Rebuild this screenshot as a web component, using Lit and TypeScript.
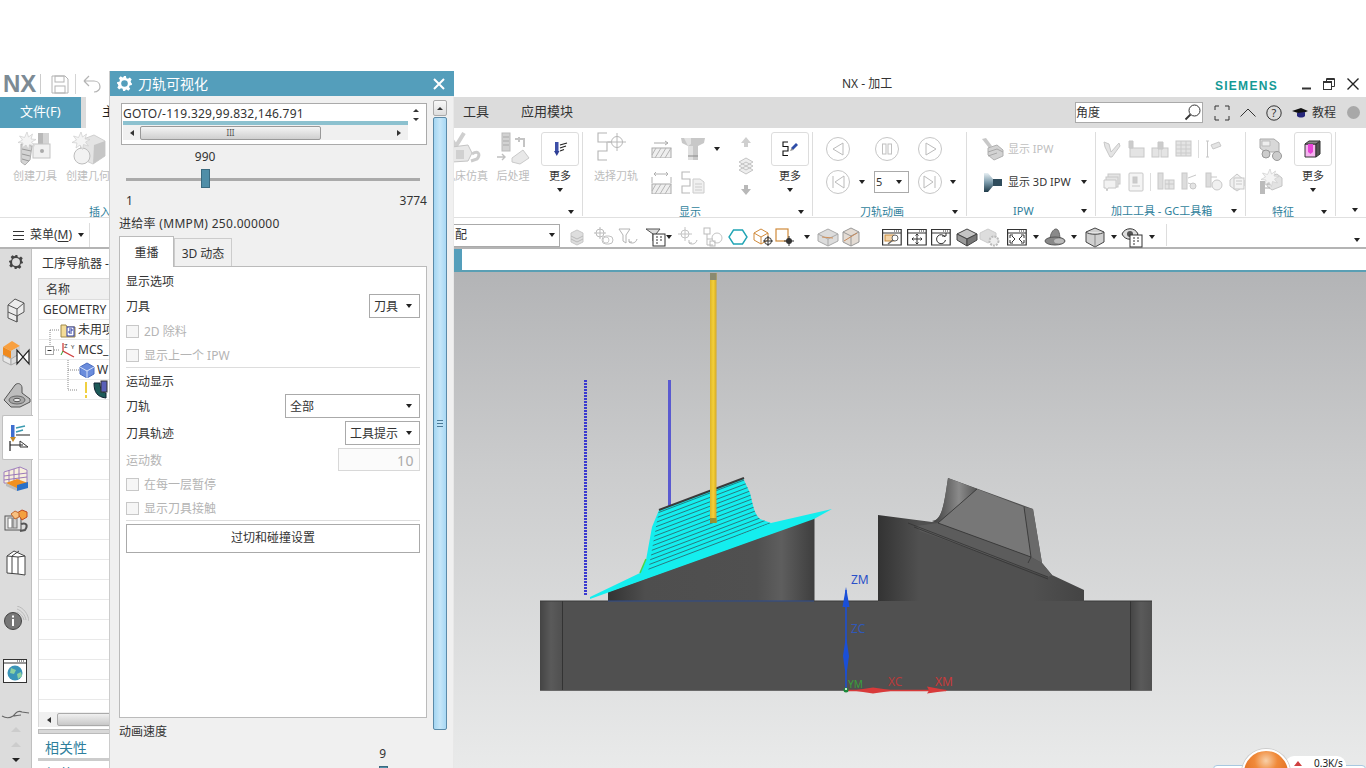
import { LitElement, css, html, svg, TemplateResult } from "lit";
import { customElement } from "lit/decorators.js";

const ic = (w: number, h: number, body: unknown) =>
  html`<svg class="ic" width=${w} height=${h} viewBox="0 0 ${w} ${h}" fill="none">${body}</svg>`;

const burst = (x: number, y: number) => svg`<path transform="translate(${x} ${y})" d="M8 0l1.500 5 4-3-1.500 5 5 .5-4.500 2.500 3 4-5-1.500-1 5-2.500-4.500-4 3 1-5-5-.5 4.500-2.500-3-4 5 1.500z" fill="#f4f4f4" stroke="#cfcfcf" stroke-width=".7"/>`;

// ribbon icons
const createTool = ic(38, 34, svg`
  <rect x="22" y="1" width="11" height="17" fill="#b8b8b8"/><rect x="27" y="1" width="6" height="17" fill="#d4d4d4"/>
  <rect x="17" y="12" width="17" height="14" fill="#f0f0f0" stroke="#c4c4c4"/><circle cx="26" cy="19" r="2" fill="#aaa"/>
  <path d="M5 12l11 2-2 14-5 5-4-3z" fill="#d4d4d4" stroke="#b0b0b0"/><path d="M6 17l9 2M6 22l8 2M6 27l7 2" stroke="#999"/>
  ${burst(3, 0)}`);
const createGeom = ic(38, 34, svg`
  <path d="M12 8l13-5 11 6v15l-12 8-13-6z" fill="#e4e4e4" stroke="#d0d0d0"/><path d="M25 13l11-4v15l-12 8z" fill="#c6c6c6"/>
  <circle cx="13" cy="24" r="8" fill="#f2f2f2" stroke="#bdbdbd"/>${burst(4, 0)}`);
const machineSim = ic(36, 34, svg`
  <path d="M4 8l4 6 8-13" stroke="#cfcfcf" stroke-width="4"/><path d="M4 15l16-2 4 8-4 8-16 1z" fill="#e8e8e8" stroke="#c4c4c4"/>
  <rect x="8" y="18" width="8" height="9" fill="#d0d0d0"/><path d="M24 22c6-4 9 0 5 5l-6 2" stroke="#ccc" stroke-width="3"/>`);
const postProc = ic(36, 34, svg`
  <rect x="7" y="1" width="8" height="18" fill="#d2d2d2" stroke="#bbb"/><path d="M8 5h6M8 9h6M8 13h6" stroke="#aaa"/>
  <path d="M20 7h9v8M24 5v5" stroke="#c4c4c4" stroke-width="2"/><path d="M2 25h8m-3-3l3 3-3 3" stroke="#c0c0c0" stroke-width="1.400"/>
  <path d="M17 26l11-8 6 8-9 6-8-2z" fill="#e8e8e8" stroke="#cacaca"/>`);
const moreOp = ic(20, 20, svg`
  <rect x="5" y="3" width="3.500" height="9" fill="#3c4fa8"/><path d="M4 12h5.500l-2.700 5z" fill="#2f3f96"/>
  <path d="M10 6l7-2M10 9l6-2M10 12l4-1.500" stroke="#222" stroke-width="1.200"/>`);
const selectPath = ic(40, 34, svg`
  <path d="M11 1H2v9h9v9H2v9h9" stroke="#b4b4b4" stroke-width="1.100"/>
  <path d="M11 10h4" stroke="#b4b4b4"/>
  <circle cx="21" cy="10" r="5.500" stroke="#b8b8b8"/><path d="M21 1v18M12 10h18" stroke="#b8b8b8"/>`);
const hatch = svg`<rect x="1" y="8" width="19" height="10" fill="#eee" stroke="#aaa"/><path d="M4 18l6-10M9 18l6-10M14 18l6-10M1 15l4-7" stroke="#b4b4b4"/>`;
const pathHatch = ic(21, 18, svg`${hatch}<path d="M3 3h14m-3-2l3 2-3 2" stroke="#aaa"/>`);
const pathHatch2 = ic(23, 23, svg`<g transform="translate(1 5)">${hatch}</g><path d="M4 3h14M2 6v6M21 6v6M6 1L4 3l2 2M16 1l2 2-2 2" stroke="#b0b0b0"/>`);
const endMill = ic(26, 24, svg`
  <path d="M1 1h24l-1 5-6 3v14H8V9L2 6z" fill="#c8c8c8"/><path d="M4 1h7v6l-3 2z" fill="#e2e2e2"/><rect x="8" y="9" width="5" height="14" fill="#e0e0e0"/><path d="M8 19h10" stroke="#8a8a8a"/>`);
const pathDoc = ic(24, 23, svg`
  <path d="M9 1H1v7h8v7H1v7h8" stroke="#b8b8b8" stroke-width="1.100"/>
  <path d="M12 8h7l4 3v11H12z" fill="#f0f0f0" stroke="#ccc"/><path d="M14 13h7M14 16h7M14 19h7" stroke="#ccc"/>`);
const arrowUp = ic(12, 12, svg`<path d="M6 1l5 6H8v4H4V7H1z" fill="#cfcfcf"/>`);
const arrowDown = ic(12, 12, svg`<path d="M6 11l5-6H8V1H4v4H1z" fill="#b8b8b8"/>`);
const layers = ic(16, 18, svg`<path d="M1 5l7-4 7 4-7 4zM1 9l7-4 7 4-7 4zM1 13l7-4 7 4-7 4z" fill="#eee" stroke="#c4c4c4"/>`);
const pathMore = ic(20, 20, svg`
  <path d="M8 3H3v4.500h5V12H3v4.500h5" stroke="#111" stroke-width="1.100"/>
  <path d="M11 9l5-5 2 2-5 5z" fill="#2e4da8"/><path d="M10 12l1.500-3 2 2z" fill="#888"/>`);
const circleIc = (inner: unknown) => ic(26, 26, svg`<circle cx="13" cy="13" r="11.500" stroke="#c6c6c6"/>${inner}`);
const cBack = circleIc(svg`<path d="M18 7L8 13l10 6z" stroke="#bbb"/>`);
const cPause = circleIc(svg`<rect x="8.500" y="8" width="3.500" height="10" stroke="#c0c0c0"/><rect x="14" y="8" width="3.500" height="10" stroke="#c0c0c0"/>`);
const cPlay = circleIc(svg`<path d="M9 7l10 6-10 6z" stroke="#bbb"/>`);
const cStart = circleIc(svg`<path d="M8 7v12M19 7L10 13l9 6z" stroke="#bbb"/>`);
const cEnd = circleIc(svg`<path d="M18 7v12M7 7l9 6-9 6z" stroke="#bbb"/>`);
const ipwGray = ic(24, 24, svg`
  <path d="M2 2l4-1 6 8-3 2z" fill="#c8c8c8"/><path d="M8 11l9-3 6 5v6l-9 4-6-5z" fill="#d2d2d2" stroke="#b0b0b0"/><path d="M8 15l9-3 6 3M8 19l9-3" stroke="#a8a8a8"/>`);
const ipw3d = ic(20, 20, svg`
  <defs><linearGradient id="st" x1="0" y1="0" x2="0" y2="1"><stop offset="0" stop-color="#e8f0f4"/><stop offset=".5" stop-color="#7b9aaa"/><stop offset="1" stop-color="#1e3a48"/></linearGradient></defs>
  <path d="M1 1h4l5 6h9v7h-9l-5 6H1z" fill="url(#st)"/><path d="M10 7h9v7h-9z" fill="#2f4c5c"/>`);
const gr = (body: unknown) => ic(20, 20, svg`<g stroke="#c8c8c8" fill="#e4e4e4">${body}</g>`);
const t1 = gr(svg`<path d="M2 3l5 2 2 8 8-9 1 3-8 11h-2L3 8z"/>`);
const t2 = gr(svg`<rect x="4" y="9" width="14" height="9"/><path d="M3 2h4v7H3z" fill="#ccc"/>`);
const t3 = gr(svg`<rect x="2" y="9" width="7" height="9"/><rect x="11" y="9" width="7" height="9"/><path d="M8 3h5v7H8z" fill="#ccc"/>`);
const t4 = gr(svg`<rect x="2" y="2" width="15" height="15"/><path d="M2 6h15M2 10h15M2 14h15M7 2v15M12 2v15" stroke="#ccc"/>`);
const t5 = gr(svg`<path d="M3 2h3M4.500 2v16M3 18h3M8 6l8-3 2 4-8 3z"/>`);
const t6 = gr(svg`<rect x="6" y="2" width="12" height="10"/><rect x="4" y="5" width="12" height="10"/><path d="M2 8h12v8H6l-1 3-1-3H2z" fill="#f2f2f2"/>`);
const t7 = gr(svg`<rect x="3" y="1" width="14" height="18" rx="1" fill="#f4f4f4"/><rect x="7" y="5" width="4" height="6" fill="#ccc"/><path d="M6 14h8" />`);
const t8 = gr(svg`<rect x="3" y="1" width="5" height="16" fill="#ddd"/><rect x="10" y="8" width="9" height="9"/><path d="M10 12h9M14 8v9"/>`);
const t9 = gr(svg`<rect x="3" y="1" width="5" height="16" fill="#ddd"/><path d="M9 6l8-3M9 11l8 3"/><circle cx="14" cy="14" r="3"/>`);
const t10 = gr(svg`<rect x="3" y="1" width="5" height="14" fill="#ddd"/><path d="M8 5h6"/><circle cx="14" cy="13" r="5" fill="#f0f0f0"/>`);
const t11 = gr(svg`<path d="M3 8l7-6 7 6v6l-7 5-7-5z" fill="#efefef"/><rect x="7" y="6" width="10" height="11" fill="#f4f4f4"/><path d="M9 9h6M9 12h6"/>`);
const feat1 = ic(26, 26, svg`<path d="M3 3h14l5 4v9H8l-5-4z" fill="#d8d8d8" stroke="#aaa"/><circle cx="9" cy="18" r="4" fill="#ccc" stroke="#999"/><circle cx="20" cy="20" r="4.500" fill="#ccc" stroke="#999"/><path d="M5 5h8v5H5z" fill="#eee" stroke="#bbb"/>`);
const feat2 = ic(26, 26, svg`<path d="M10 8l10-3 5 4v8l-10 4-5-4z" fill="#e2e2e2" stroke="#c4c4c4"/><rect x="3" y="12" width="5" height="13" fill="#bbb"/><path d="M8 15h6M8 19h5" stroke="#aaa"/>${burst(5, 0)}`);
const featMore = ic(18, 18, svg`
  <path d="M1 4h11v13H1z" fill="#f4b4ee" stroke="#333"/><path d="M12 4l4-3v13l-4 3z" fill="#555" stroke="#333"/><path d="M1 4l4-3h11l-4 3z" fill="#888" stroke="#333"/>
  <path d="M4 4v8l2.500 2L9 12V4z" fill="#e844d8"/>`);

// toolbar icons
const stackGray = ic(18, 20, svg`<path d="M3 6l6-3 6 3v9l-6 3-6-3z" fill="#dedede" stroke="#c8c8c8"/><path d="M3 9l6 3 6-3M3 12l6 3 6-3" stroke="#bbb"/>`);
const crossLink = ic(22, 20, svg`<circle cx="7" cy="6" r="4" stroke="#bbb"/><path d="M7 0v12M1 6h12" stroke="#bbb"/><rect x="9" y="9" width="11" height="8" rx="4" stroke="#c0c0c0" fill="#fff"/><circle cx="13" cy="13" r="3" stroke="#ccc"/>`);
const funnel = ic(22, 20, svg`<path d="M2 2h11l-4 6v8l-3-2V8z" stroke="#b4b4b4"/><path d="M20 12c-1 4-5 5-8 3m0 0v-3m0 3h3" stroke="#b0b0b0"/>`);
const funnelGrid = ic(22, 20, svg`<path d="M2 2h14l-4 5v9l-3-2V7z" fill="#ddd" stroke="#555"/><rect x="9" y="7" width="12" height="12" fill="#fff" stroke="#333"/><path d="M12 10h2M16 10h2M12 13h2M16 13h2M12 16h2" stroke="#333"/>`);
const crossUndo = ic(22, 20, svg`<circle cx="8" cy="7" r="4" stroke="#c4c4c4"/><path d="M8 0v14M1 7h14" stroke="#c4c4c4"/><path d="M20 13c-1 4-5 5-8 3m0 0v-3m0 3h3" stroke="#bbb"/>`);
const treeSel = ic(22, 20, svg`<rect x="2" y="1" width="6" height="6" stroke="#bbb"/><path d="M5 7v11h6M5 12h6" stroke="#bbb"/><circle cx="15" cy="11" r="5" stroke="#c4c4c4"/><rect x="8" y="14" width="5" height="5" stroke="#bbb"/>`);
const hexagon = ic(20, 18, svg`<path d="M5.500 2h9L19 9l-4.500 7h-9L1 9z" stroke="#1fa4b4" stroke-width="1.400"/>`);
const cubeCross = ic(22, 20, svg`<path d="M1 6l7-4 7 4v7l-7 4-7-4z" fill="#fff" stroke="#d08a3a"/><path d="M1 6l7 4 7-4M8 10v7" stroke="#d08a3a"/><circle cx="15" cy="14" r="3.500" stroke="#333"/><path d="M15 9v10M10 14h10" stroke="#333"/>`);
const squareCross = ic(22, 20, svg`<rect x="2" y="2" width="12" height="12" stroke="#d08a3a" stroke-width="1.200"/><circle cx="15" cy="14" r="3" fill="#333"/><path d="M15 9v10M10 14h10" stroke="#333"/>`);
const cubeCut = ic(22, 20, svg`<path d="M1 7l10-5 10 5v7l-10 5-10-5z" fill="#dcdcdc" stroke="#aaa"/><path d="M1 7l10 5 10-5M11 12v7" stroke="#aaa"/><path d="M5 10l11 1" stroke="#d0905a"/>`);
const cubeCut2 = ic(18, 20, svg`<path d="M1 5l8-4 8 4v10l-8 4-8-4z" fill="#e4dcd4" stroke="#999"/><path d="M1 5l8 4 8-4M9 9v10" stroke="#999"/><path d="M2 14l13-8" stroke="#c88a5a"/>`);
const win = (inner: unknown) => ic(20, 20, svg`<rect x=".5" y="2.500" width="15.500" height="15.500" transform="scale(1.200 1)" fill="#fff" stroke="#333"/><path d="M1 6h18" stroke="#333"/><path d="M12 4h6" stroke="#333" stroke-dasharray="1 1"/>${inner}`);
const winZoom = win(svg`<rect x="3" y="8" width="9" height="6" fill="#f4d4a8" stroke="#c88a3a"/><circle cx="13" cy="11" r="3" fill="#fff" stroke="#666"/><path d="M11 13l-5 4" stroke="#666" stroke-width="1.500"/>`);
const winPan = win(svg`<path d="M10 7v10M5 12h10" stroke="#333"/><path d="M8.500 8.500L10 7l1.500 1.500M8.500 15.500L10 17l1.500-1.500M6.500 10.500L5 12l1.500 1.500M13.500 10.500L15 12l-1.500 1.500" stroke="#333"/>`);
const winRotate = win(svg`<path d="M14 10a4.500 4.500 0 1 0 .5 3" stroke="#333"/><path d="M11 9h4V6" stroke="#333"/>`);
const winFit = win(svg`<path d="M3 8h3M3 8v3M17 8h-3M17 8v3M3 16h3M3 16v-3M17 16h-3M17 16v-3" stroke="#333"/><path d="M5 9l3 3M15 9l-3 3M5 15l3-3M15 15l-3-3" stroke="#333"/>`);
const solidCube = ic(22, 20, svg`<path d="M1 7l10-5 10 5-10 5z" fill="#c4c4c4" stroke="#444"/><path d="M1 7v6l10 6V12z" fill="#999" stroke="#444"/><path d="M21 7v6l-10 6V12z" fill="#777" stroke="#444"/>`);
const cubeGear = ic(22, 20, svg`<path d="M1 6l8-4 8 4v6l-8 4-8-4z" fill="#ddd" stroke="#ccc"/><circle cx="15" cy="14" r="4.500" fill="#eee" stroke="#bbb" stroke-width="2" stroke-dasharray="2 1"/>`);
const cone = ic(24, 20, svg`<path d="M7 13c0-6 3-11 6-11s4 6 4 11z" fill="#8a8a8a" stroke="#666"/><ellipse cx="12" cy="14" rx="10" ry="4" fill="#888" stroke="#555"/><ellipse cx="16" cy="14" rx="5" ry="2.500" fill="#bbb"/>`);
const cylinderBlock = ic(22, 22, svg`<path d="M2 6l9-4 9 4v10l-9 5-9-5z" fill="#d0d0d0" stroke="#444"/><path d="M2 6c3 3 15 3 18 0" stroke="#444" fill="#e4e4e4"/><path d="M11 9v12" stroke="#888"/>`);
const eyeGrid = ic(24, 22, svg`<path d="M1 8c3-7 13-7 16 0-3 7-13 7-16 0z" fill="#ddd" stroke="#333"/><circle cx="9" cy="8" r="3" fill="#555"/><rect x="9" y="9" width="12" height="12" fill="#fff" stroke="#333"/><path d="M12 12h2M16 12h2M12 15h2M16 15h2M12 18h2" stroke="#333"/>`);

// left rail icons
const railBlock = ic(24, 26, svg`<path d="M11 1l9 4v9l-7 4v6L4 20V7z" fill="#ececec" stroke="#555"/><path d="M4 7l9 4v13M13 11l7-6M4 14l9 4" stroke="#555"/>`);
const railOrange = ic(30, 28, svg`
  <path d="M2 8l9-6 8 5-9 5z" fill="#f8a040"/><path d="M2 8l8 4v8l-8-4z" fill="#f08a1e"/><path d="M10 12l9-5v7l-9 6z" fill="#cfcfcf"/>
  <path d="M2 16v6l8 4v-6z" fill="#e8e8e8" stroke="#aaa"/><path d="M10 20v6l8-4v-7z" fill="#ddd" stroke="#aaa"/>
  <path d="M16 11v14l12-14v14z" stroke="#222" stroke-width="1.200" fill="#fff"/>`);
const railBracket = ic(30, 26, svg`
  <path d="M3 18L14 3c3-3 7-1 7 3v5l8 6v3l-10 5H10z" fill="#bdbdbd" stroke="#555"/><ellipse cx="16" cy="18" rx="8" ry="4" fill="#a8a8a8" stroke="#666"/><ellipse cx="16" cy="18" rx="3.500" ry="1.700" fill="#eee" stroke="#555"/>`);
const railNav = ic(24, 28, svg`
  <rect x="5" y="1" width="3.500" height="12" fill="#3f6fd0"/><path d="M4 13h6l-3 5z" fill="#c28a2a"/><path d="M10 4l9-2M10 8l7-2" stroke="#3a9ab0" stroke-width="1.400"/>
  <path d="M10 11h14M4 17v10M4 21h13" stroke="#222" stroke-width="1.200"/><path d="M14 17l8 6h-8z" stroke="#333"/>`);
const railTable = ic(26, 26, svg`
  <path d="M1 6l16-5 7 3v14L1 17z" fill="#f8f0dc" stroke="#a080c0"/><path d="M6 4v14M11 3v15M16 1v17M1 10l23-3M1 14l23-3" stroke="#9a78b8"/>
  <path d="M3 17l11-4 11 4-11 6z" fill="#f09020"/><path d="M14 19l11-3v6l-11 3z" fill="#2a70c8"/><path d="M3 17v3l11 5v-3z" fill="#bbb"/>`);
const railMachine = ic(26, 26, svg`
  <rect x="2" y="8" width="16" height="14" fill="#e4e4e4" stroke="#555"/><rect x="5" y="10" width="4" height="10" fill="#fff" stroke="#777"/><rect x="10" y="10" width="4" height="10" fill="#ccc" stroke="#777"/>
  <path d="M14 5l5-3 5 2v5l-5 3z" fill="#f4a040" stroke="#c04820"/><path d="M8 6l4-3 4 2v4l-4 2z" fill="#f8c080" stroke="#c06830"/><path d="M18 16c6-2 7 2 4 6l-5 1" stroke="#555" stroke-width="2"/>`);
const railBooks = ic(22, 26, svg`<path d="M2 6l7-5 11 5v19l-7-1-11-1z" fill="#fff" stroke="#444"/><path d="M13 7v17M7 6v18M2 6l11 1 7-1M7 6l7-5" stroke="#444"/>`);
const railInfo = ic(26, 26, svg`
  <circle cx="10" cy="15" r="8.500" fill="#777" stroke="#444"/><rect x="9" y="13" width="2" height="7" fill="#fff"/><rect x="9" y="9.500" width="2" height="2" fill="#fff"/>
  <path d="M14 3c5 2 8 6 9 11M14 6c4 2 6 4 7 8M14 0c7 2 11 8 12 15" stroke="#bbb"/>`);
const railGlobe = ic(26, 26, svg`
  <rect x=".5" y="1.500" width="23" height="23" fill="#fff" stroke="#333"/><path d="M1 5h23" stroke="#333"/><path d="M14 3h8" stroke="#333" stroke-dasharray="1 1"/>
  <circle cx="12" cy="15" r="7.500" fill="#3a94b8"/><path d="M8 10l5 2-2 4-4-1zM14 16l4-2 1 4-4 3z" fill="#8cd0a0"/>`);
const railWave = ic(30, 12, svg`<path d="M1 8c5 3 8 2 11 0 3-3 5-6 9-4l7 1M12 8c3 0 5-1 8-1" stroke="#666" stroke-width="1.100"/>`);
const arrowSmall = ic(12, 10, svg`<path d="M6 2l5 5H1z" fill="#ccc"/>`);
const arrowTiny = ic(12, 10, svg`<path d="M6 7L2 3h8z" fill="#222"/>`);
const gear = (c: string, hole: string, s = 16, r = 3.5) => html`<svg class="ic" width=${s} height=${s} viewBox="0 0 16 16"><path d="M6.500 0h3l.5 2.300 1.700.7 2-1.300 2 2-1.200 2 .7 1.800L16 8v0l-.2 1.500-2.300.5-.7 1.700 1.300 2-2 2-2-1.200-1.800.7L9.500 16h-3L6 13.700 4.300 13l-2 1.300-2-2 1.200-2-.7-1.800L0 8l.2-1.500 2.300-.5.700-1.700-1.300-2 2-2 2 1.200 1.800-.7z" fill=${c}/><circle cx="8" cy="8" r=${r} fill=${hole}/></svg>`;

// tree icons
const treeFolder = ic(16, 16, svg`<path d="M1 3h5l1 2h8v10H1z" fill="#f4dc98" stroke="#a08a4a"/><rect x="7" y="5" width="7" height="9" fill="#fff" stroke="#2838a0"/><path d="M9 7h3v2H9v2h3" stroke="#2838a0"/>`);
const treeAxes = ic(16, 16, svg`<path d="M3 1v8l11 6" stroke="#d04040" stroke-width="1.300"/><path d="M3 9l-2 4" stroke="#30a030"/><text x="4" y="6" font-size="6" fill="#333">Z</text><text x="11" y="7" font-size="6" fill="#333">Y</text>`);
const treeCube = ic(16, 16, svg`<path d="M1 5l7-4 7 4v7l-7 4-7-4z" fill="#6a8cdc" stroke="#4a6cc0"/><path d="M1 5l7 4 7-4M8 9v7" stroke="#d4e0f8"/>`);
const treeOp = ic(16, 20, svg`<path d="M1 3c0 9 3 14 12 15v-5c-4-1-6-4-6-10z" fill="#1d5a58" stroke="#123"/><rect x="8" y="1" width="6" height="11" fill="#5a60b8" stroke="#333"/>`);

const caret = html`<i class="caret"></i>`;

interface Tool { x: number; w: number; icon: TemplateResult; caret?: number; }

const TOOLS: Tool[] = [
  { x: 577, w: 18, icon: stackGray }, { x: 604, w: 22, icon: crossLink }, { x: 628, w: 22, icon: funnel },
  { x: 655, w: 22, icon: funnelGrid, caret: 669 }, { x: 689, w: 22, icon: crossUndo }, { x: 714, w: 22, icon: treeSel },
  { x: 739, w: 20, icon: hexagon }, { x: 765, w: 22, icon: cubeCross }, { x: 786, w: 22, icon: squareCross, caret: 808 },
  { x: 830, w: 22, icon: cubeCut }, { x: 853, w: 18, icon: cubeCut2 }, { x: 894, w: 20, icon: winZoom },
  { x: 919, w: 20, icon: winPan }, { x: 943, w: 20, icon: winRotate }, { x: 969, w: 22, icon: solidCube },
  { x: 992, w: 22, icon: cubeGear }, { x: 1019, w: 20, icon: winFit, caret: 1038 }, { x: 1058, w: 24, icon: cone, caret: 1077 },
  { x: 1099, w: 22, icon: cylinderBlock, caret: 1118 }, { x: 1138, w: 24, icon: eyeGrid, caret: 1157 },
];

const FEED_MIN = 1;
const FEED_MAX = 3774;
const FEED_NOW = 990;

@customElement("app-root")
export class AppRoot extends LitElement {
  static styles = css`
    :host {
      display: block;
      width: 1366px;
      height: 768px;
      overflow: hidden;
      position: relative;
      background: #fff;
      color: #333;
      font: 12px/16px "Noto Sans", "Noto Sans CJK SC", sans-serif;
    }
    * { box-sizing: border-box; }
    .ic { display: block; flex: none; }
    .caret {
      display: inline-block; flex: none; width: 0; height: 0;
      border: 3.5px solid transparent; border-top: 4px solid #222; border-bottom: 0;
    }
    .blank { height: 71px; }

    .titlebar { height: 26px; display: flex; align-items: center; background: #fff; }
    .logo { width: 41px; padding-left: 3px; font: bold 24px/20px "Liberation Sans", sans-serif; color: #7c8a94; border-right: 1px solid #ccc; height: 20px; white-space: nowrap; }
    .qa { width: 801px; padding-left: 10px; display: flex; gap: 6px; align-items: center; }
    .qa-sep { width: 1px; height: 20px; background: #d4d4d4; }
    .doc-title { font-size: 12px; color: #333; }
    .siemens { margin-left: auto; font: bold 12px/16px "Liberation Sans", sans-serif; letter-spacing: 1.300px; color: #149a96; margin-top: 3px; }
    .win-btns { display: flex; align-items: center; margin-left: 24px; margin-right: 7px; gap: 12px; }

    .tabs { height: 31px; background: #dcdcdc; display: flex; align-items: center; font-size: 13px; }
    .tab-file { width: 81px; height: 31px; line-height: 29px; padding-left: 20px; background: #549ebb; color: #fff; }
    .tab-home { width: 60px; height: 31px; margin-left: 5px; background: #fff; padding-left: 16px; line-height: 29px; color: #222; }
    .tab { color: #333; margin-bottom: 3px; }
    .tab.tools { margin-left: 317px; }
    .tab.modules { margin-left: 32px; }
    .search { margin-left: auto; width: 128px; height: 21px; background: #fff; border: 1px solid #aaa; display: flex; align-items: center; justify-content: space-between; font-size: 12px; padding: 0 1px 0 0; }
    .tab-icons { display: flex; align-items: center; width: 163px; padding-left: 11px; }
    .ti-gap { width: 10px; flex: none; }
    .tut { font-size: 12px; color: #333; margin-left: 4px; }
    .dot { width: 13px; height: 13px; border-radius: 50%; background: #a8a8a8; margin-left: 11px; }

    .ribbon { height: 90px; display: flex; background: #fff; border-bottom: 1px solid #e0e0e0; }
    .group { height: 84px; margin-top: 4px; border-right: 1px solid #ddd; display: flex; flex-direction: column; flex: none; }
    .body { height: 67px; display: grid; grid-template-rows: 33px 34px; align-items: center; justify-items: center; }
    .foot { flex: 1; display: flex; align-items: center; font-size: 11px; color: #2f7f9c; padding: 5px 8px 0 0; }
    .foot .caret { margin-left: auto; }
    .big { grid-row: span 2; align-self: start; display: flex; flex-direction: column; align-items: center; width: 100%; }
    .big .pic { height: 34px; display: flex; align-items: center; justify-content: center; }
    .big span { margin-top: 2px; font-size: 11px; color: #bdbdbd; white-space: nowrap; }
    .big.more span { color: #333; }
    .big.more .pic { width: 38px; border: 1px solid #ddd; border-radius: 3px; }
    .big.more .caret { margin-top: 4px; }
    .g-insert { width: 583px; }
    .g-insert .body { grid-template-columns: 10px 50px 56px 326px 48px 46px 5px 38px; }
    .g-insert .b1 { grid-column: 2; } .g-insert .b2 { grid-column: 3; } .g-insert .b3 { grid-column: 5; }
    .g-insert .b4 { grid-column: 6; } .g-insert .b5 { grid-column: 8; }
    .g-insert .foot { padding-left: 89px; }
    .g-show { width: 230px; }
    .g-show .body { grid-template-columns: 66px 24px 40px 8px 50px 38px; grid-template-rows: 33px 34px; }
    .g-show .big-more { grid-column: 6; grid-row: 1 / span 2; }
    .g-show .c5 { grid-column: 5; grid-row: 1 / span 2; display: flex; flex-direction: column; align-items: center; gap: 9px; }
    .g-show .foot { padding-left: 96px; }
    .g-anim { width: 154px; }
    .g-anim .body { grid-template-columns: 13px 24px 24px 35px 9px 24px 22px; }
    .g-anim .foot { padding-left: 47px; }
    .g-anim .start { justify-self: start; }
    .step { border: 1px solid #aaa; width: 35px; height: 22px; display: flex; align-items: center; justify-content: space-between; padding: 0 6px 0 1px; font-size: 11px; justify-self: start; }
    .g-ipw { width: 129px; }
    .g-ipw .rows { height: 67px; padding-left: 13px; }
    .ipw-row { height: 33px; display: flex; align-items: center; gap: 4px; font-size: 11px; }
    .ipw-row.off { color: #c0c0c0; }
    .ipw-row.on { gap: 5px; padding-left: 3px; }
    .ipw-row .caret { margin-left: 5px; }
    .g-ipw .foot { padding-left: 46px; }
    .g-mach { width: 150px; }
    .g-mach .rows { height: 67px; padding-left: 6px; }
    .mach-row { height: 33px; display: flex; align-items: center; gap: 4px; }
    .vsep { width: 1px; height: 18px; background: #ddd; flex: none; }
    .g-mach .foot { padding-left: 15px; }
    .g-feat { width: 90px; }
    .g-feat .body { grid-template-columns: 48px 38px; }
    .g-feat .big { grid-column: 2; grid-row: 1 / span 2; }
    .g-feat .foot { padding-left: 26px; }
    .g-last { width: 30px; border-right: 0; }

    .toolbar { height: 31px; display: flex; align-items: center; background: #fff; border-bottom: 2px solid #b4b4b4; padding-top: 5px; }
    .menu-btn { display: flex; align-items: center; width: 90px; padding-left: 13px; gap: 6px; border-right: 1px solid #ddd; height: 24px; flex: none; }
    .menu-btn u { text-underline-offset: 2px; }
    .combo { margin-left: 320px; width: 150px; height: 23px; border: 1px solid #aaa; display: flex; align-items: center; justify-content: space-between; padding: 0 4px 0 44px; flex: none; }
    .tb-sep { width: 1px; height: 22px; background: #ddd; flex: none; }
    .tool-box { display: flex; align-items: center; flex: none; }
    .toolbar > .tool-box { margin-top: 3px; }
    .tb-end { margin-left: auto; margin-right: 6px; margin-top: 6px; }

    .main { height: 519px; display: flex; }
    .rail { width: 32px; flex: none; background: #dcdcdc; border-right: 1px solid #c0c0c0; display: flex; flex-direction: column; align-items: center; }
    .r { height: 42px; flex: none; display: flex; align-items: center; justify-content: center; width: 100%; }
    .r.gear { height: 26px; margin-bottom: 15px; }
    .r.m14 { margin-top: 14px; }
    .r.m10 { margin-top: 10px; }
    .r.wave { height: 16px; margin-top: 14px; }
    .r.active { background: #fff; margin-left: 3px; width: 31px; border: 1px solid #c0c0c0; border-right: 0; height: 45px; margin-top: -1px; margin-bottom: -2px; border-radius: 2px 0 0 2px; z-index: 1; }
    .r.tiny { height: 15px; }
    .nav { width: 422px; flex: none; background: #fff; padding-left: 6px; }
    .nav-title { height: 29px; padding: 7px 0 0 4px; }
    .nav-table { border: 1px solid #d8d8d8; border-width: 1px 0 0 1px; height: 434px; overflow: hidden; }
    .nav-head { height: 21px; background: #f0f0f0; padding: 3px 0 0 7px; border-bottom: 1px solid #ddd; }
    .row { height: 20px; border-bottom: 1px solid #e9e9e9; display: flex; align-items: center; white-space: nowrap; }
    .row.geo { padding-left: 4px; }
    .row .t2 { margin-left: 2px; }
    .row .t3 { margin-left: 2px; }
    .nav-scroll { height: 15px; background: #f0f0f0; display: flex; align-items: center; padding-left: 8px; gap: 6px; border-left: 1px solid #d8d8d8; }
    .nav-thumb { width: 100px; height: 13px; border: 1px solid #aaa; border-radius: 2px; background: linear-gradient(#f0f0f0, #c8c8c8); }
    .nav-bar { height: 5px; margin-top: 2px; background: #d8d8d8; border: 1px solid #bbb; }
    .nav-link { font-size: 14px; color: #2f7f9c; padding-left: 7px; height: 21px; line-height: 26px; margin-top: 1px; }
    .nav-bar2 { height: 3px; margin-top: 2px; background: #ccc; }
    .nav-bar2 + .nav-link { margin-top: 0; }
    .work { flex: 1; display: flex; flex-direction: column; min-width: 0; }
    .strip { height: 21px; background: #fff; }
    .strip i { display: block; width: 8px; height: 21px; background: #549ebb; }
    .strip-line { height: 2px; background: #5a9fb4; }
    .view { flex: 1; display: block; width: 912px; height: 496px; }

    .dlg { position: absolute; left: 109px; top: 71px; width: 345px; height: 697px; background: #f0f0f0; border-left: 1px solid #ccc; overflow: hidden; }
    .dlg-title { height: 25px; background: #549ebb; color: #fff; display: flex; align-items: center; padding-left: 7px; gap: 6px; font-size: 14px; }
    .dlg-title svg:last-child { margin-left: auto; margin-right: 9px; }
    .dlg-body { display: flex; }
    .dlg-main { width: 308px; margin-left: 9px; flex: none; padding-top: 7px; }
    .list { margin-left: 2px; height: 42px; border: 1px solid #aaa; background: #fff; position: relative; }
    .list-text { padding-left: 1px; height: 17px; line-height: 19px; letter-spacing: .22px; }
    .sel { width: 285px; margin-left: 1px; height: 4px; background: #8cc1cf; }
    .hs { width: 285px; margin-left: 1px; height: 15px; background: #f0f0f0; display: flex; align-items: center; justify-content: space-between; padding: 0 7px; position: relative; }
    .hs-thumb { position: absolute; left: 17px; top: 1px; width: 181px; height: 14px; border: 1px solid #999; border-radius: 2px; background: linear-gradient(#f4f4f4, #cfcfcf); text-align: center; font-size: 8px; line-height: 11px; color: #555; }
    .tri-l { border: 3px solid transparent; border-right: 4px solid #333; border-left: 0; width: 0; height: 0; }
    .tri-r { border: 3px solid transparent; border-left: 4px solid #333; border-right: 0; width: 0; height: 0; }
    .spin { position: absolute; right: 7px; top: 5px; display: flex; flex-direction: column; gap: 6px; }
    .tri-u { border: 3px solid transparent; border-bottom: 3px solid #333; border-top: 0; width: 0; height: 0; }
    .tri-d { border: 3px solid transparent; border-top: 3px solid #333; border-bottom: 0; width: 0; height: 0; }
    .slide { padding: 0 7px; height: 44px; position: relative; margin-top: 3px; }
    .slide-val { position: absolute; top: 1px; width: 30px; margin-left: -15px; text-align: center; }
    .track { position: absolute; left: 7px; right: 7px; top: 30px; height: 3px; background: #aaa; }
    .thumb { position: absolute; top: 21px; width: 9px; height: 19px; background: #4f8ea8; border: 1px solid #3a6a80; }
    .ends { display: flex; justify-content: space-between; padding: 1px 0 0 7px; height: 16px; }
    .feed { margin-top: 7px; height: 16px; padding-top: 1px; white-space: nowrap; letter-spacing: .3px; }
    .dtabs { display: flex; margin-top: 5px; height: 30px; align-items: flex-end; }
    .dtab { height: 28px; width: 58px; border: 1px solid #ccc; border-bottom: 0; text-align: center; line-height: 30px; background: #f0f0f0; }
    .dtab.on { width: 55px; height: 31px; background: #fff; border-color: #bbb; line-height: 32px; margin-bottom: -1px; z-index: 1; }
    .panel { height: 452px; background: #fff; border: 1px solid #bbb; padding: 6px 6px 0; }
    .lbl { height: 16px; padding-top: 1px; }
    .lbl.m5 { margin-top: 5px; }
    .r-ctl { display: flex; align-items: center; justify-content: space-between; margin-top: 3px; }
    .r-ctl.m5 { margin-top: 5px; }
    .r-ctl.off { color: #b4b4b4; }
    .r-ctl > span { padding-top: 2px; }
    .sel-box { border: 1px solid #aaa; background: #fff; height: 24px; padding: 2px 7px 0 4px; display: flex; align-items: center; justify-content: space-between; flex: none; }
    .sel-box .caret { margin-top: -2px; }
    .w51 { width: 51px; } .w135 { width: 135px; } .w75 { width: 75px; }
    .chk { display: flex; align-items: center; gap: 5px; color: #b4b4b4; height: 24px; }
    .chk span { padding-top: 2px; }
    .chk.m1 { margin-top: 1px; }
    .chk i { width: 13px; height: 13px; border: 1px solid #c8c8c8; background: #f6f6f6; flex: none; }
    .hr { height: 1px; background: #ddd; }
    .num { width: 82px; height: 23px; border: 1px solid #d8d8d8; background: #fbfbfb; color: #aaa; text-align: right; padding-right: 5px; font-size: 14px; line-height: 23px; letter-spacing: .5px; }
    .wide-btn { height: 29px; margin-top: 3px; border: 1px solid #aaa; text-align: center; line-height: 26px; background: #fff; }
    .anim { margin-top: 6px; height: 16px; }
    .nine { text-align: right; padding-right: 41px; margin-top: 6px; height: 16px; }
    .nine-thumb { width: 9px; height: 14px; margin: 4px 0 0 260px; background: #4f8ea8; border: 1px solid #3a6a80; }
    .vbar { width: 14px; margin-left: 6px; padding-top: 4px; flex: none; display: flex; flex-direction: column; }
    .vbtn { height: 16px; border: 1px solid #aaa; border-radius: 2px; background: linear-gradient(#f8f8f8, #ddd); display: flex; align-items: center; justify-content: center; margin-bottom: 1px; }
    .vthumb { height: 613px; border: 1px solid #5b8aa8; border-radius: 2px; background: linear-gradient(90deg, #a4d6f2, #c6e6f8 50%, #a8d8f4); display: flex; align-items: center; justify-content: center; }
    .grip { width: 6px; height: 7px; border-top: 1px solid #4a7a98; border-bottom: 1px solid #4a7a98; position: relative; }
    .grip::after { content: ""; position: absolute; left: 0; right: 0; top: 2px; height: 1px; background: #4a7a98; }
    .dlg-edge { flex: 1; background: #e8e8e8; margin-left: 6px; height: 680px; }

    .tray { position: absolute; left: 1213px; top: 765px; width: 153px; height: 20px; background: #fff; border: 1px solid #a8c8e0; border-radius: 4px 4px 0 0; }
    .speed { position: absolute; left: 1285px; top: 756px; width: 61px; height: 20px; background: #fff; border-radius: 9px 9px 0 0; padding-left: 29px; font-size: 10px; line-height: 15px; color: #222; white-space: nowrap; }
    .up { position: absolute; left: 1294px; top: 761px; width: 0; height: 0; border: 4px solid transparent; border-bottom: 5px solid #d04040; border-top: 0; }
    .ball { position: absolute; left: 1242px; top: 749px; width: 48px; height: 48px; border-radius: 50%; background: radial-gradient(circle at 50% 22%, #f8d0a8 0, #f08a3a 28%, #e06a1e 70%); border: 2px solid #fff; box-shadow: 0 0 0 1px #ccc; }
    svg text { font-family: "Noto Sans", sans-serif; }
  `;

  private big(icon: TemplateResult, label: string, cls = "") {
    return html`<div class="big ${cls}"><div class="pic">${icon}</div><span>${label}</span></div>`;
  }

  private more(icon: TemplateResult, cls = "") {
    return html`<div class="big more ${cls}"><div class="pic">${icon}</div><span>更多</span>${caret}</div>`;
  }

  private renderTitle() {
    return html`
      <div class="titlebar">
        <div class="logo">NX</div>
        <div class="qa">
          ${ic(18, 20, svg`<path d="M1 2h13l3 3v14H1z" stroke="#b4b4b4"/><rect x="4" y="2" width="9" height="6" stroke="#b4b4b4"/><rect x="4" y="12" width="10" height="7" stroke="#b4b4b4"/>`)}
          <div class="qa-sep"></div>
          ${ic(20, 18, svg`<path d="M2 6h10c5 0 6 4 6 6s-2 5-6 5M2 6l5-5M2 6l5 5" stroke="#b4b4b4" stroke-width="1.200"/>`)}
        </div>
        <div class="doc-title">NX - 加工</div>
        <div class="siemens">SIEMENS</div>
        <div class="win-btns">
          ${ic(9, 12, svg`<path d="M0 10.500h9" stroke="#333" stroke-width="2"/>`)}
          ${ic(12, 12, svg`<rect x=".5" y="3.500" width="8" height="8" stroke="#333"/><path d="M3.500 3.500v-3h8v8h-3" stroke="#333"/><path d="M.5 4.500h8M3.500 1.500h8" stroke="#333"/>`)}
          ${ic(12, 12, svg`<path d="M.5.5l11 11M11.500.5l-11 11" stroke="#222" stroke-width="1.400"/>`)}
        </div>
      </div>`;
  }

  private renderTabs() {
    return html`
      <div class="tabs">
        <div class="tab-file">文件(F)</div>
        <div class="tab-home">主页</div>
        <div class="tab tools">工具</div>
        <div class="tab modules">应用模块</div>
        <div class="search">
          <span>角度</span>
          ${ic(17, 17, svg`<circle cx="10.500" cy="6.500" r="5.500" stroke="#333"/><path d="M6.500 10.500L1.500 15.500" stroke="#333" stroke-width="1.800"/>`)}
        </div>
        <div class="tab-icons">
          ${ic(16, 16, svg`<path d="M1 5V1h4M11 1h4v4M15 11v4h-4M5 15H1v-4" stroke="#333"/>`)}
          <span class="ti-gap"></span>
          ${ic(16, 9, svg`<path d="M.5 8.500L8 1l7.500 7.500" stroke="#333"/>`)}
          <span class="ti-gap"></span>
          ${ic(16, 16, svg`<circle cx="8" cy="8" r="7.200" stroke="#333"/><text x="8" y="12" font-size="11" fill="#333" text-anchor="middle">?</text>`)}
          <span class="ti-gap"></span>
          ${ic(16, 12, svg`<path d="M0 4l9-3 7 3-7 3z" fill="#111"/><path d="M5 6v3c2 2 6 2 8 0V5z" fill="#26267a"/>`)}
          <span class="tut">教程</span>
          <div class="dot"></div>
        </div>
      </div>`;
  }

  private renderRibbon() {
    return html`
      <div class="ribbon">
        <div class="group g-insert">
          <div class="body">
            ${this.big(createTool, "创建刀具", "b1")}
            ${this.big(createGeom, "创建几何", "b2")}
            ${this.big(machineSim, "机床仿真", "b3")}
            ${this.big(postProc, "后处理", "b4")}
            ${this.more(moreOp, "b5")}
          </div>
          <div class="foot">插入${caret}</div>
        </div>
        <div class="group g-show">
          <div class="body">
            ${this.big(selectPath, "选择刀轨")}
            ${pathHatch}
            ${endMill}
            ${caret}
            <div class="c5">${arrowUp}${layers}${arrowDown}</div>
            ${this.more(pathMore, "big-more")}
            ${pathHatch2}
            ${pathDoc}
          </div>
          <div class="foot">显示${caret}</div>
        </div>
        <div class="group g-anim">
          <div class="body">
            <i></i>${cBack}<i></i><span class="start">${cPause}</span><i></i>${cPlay}<i></i>
            <i></i>${cStart}${caret}<div class="step">5${caret}</div><i></i>${cEnd}${caret}
          </div>
          <div class="foot">刀轨动画${caret}</div>
        </div>
        <div class="group g-ipw">
          <div class="rows">
            <div class="ipw-row off">${ipwGray}<span>显示 IPW</span></div>
            <div class="ipw-row on">${ipw3d}<span>显示 3D IPW</span>${caret}</div>
          </div>
          <div class="foot">IPW${caret}</div>
        </div>
        <div class="group g-mach">
          <div class="rows">
            <div class="mach-row">${t1}${t2}${t3}${t4}<div class="vsep"></div>${t5}</div>
            <div class="mach-row">${t6}${t7}<div class="vsep"></div>${t8}${t9}${t10}${t11}</div>
          </div>
          <div class="foot">加工工具 - GC工具箱${caret}</div>
        </div>
        <div class="group g-feat">
          <div class="body">
            ${feat1}
            ${this.more(featMore)}
            ${feat2}
          </div>
          <div class="foot">特征${caret}</div>
        </div>
        <div class="group g-last">
          <div class="body"></div>
          <div class="foot">${caret}</div>
        </div>
      </div>`;
  }

  private renderToolbar() {
    let end = 560;
    return html`
      <div class="toolbar">
        <div class="menu-btn">
          ${ic(11, 11, svg`<path d="M0 1.500h11M0 5.500h11M0 9.500h11" stroke="#333"/>`)}
          <span>菜单(<u>M</u>)</span>${caret}
        </div>
        <div class="combo">配${caret}</div>
        ${TOOLS.map((t) => {
          const left = t.x - t.w / 2 - end;
          end = t.x + t.w / 2;
          let trail = html``;
          if (t.caret) {
            const gap = t.caret - 3.5 - end;
            end = t.caret + 3.5;
            trail = html`<span class="tool-box" style="margin-left:${gap}px">${caret}</span>`;
          }
          return html`<div class="tool-box" style="margin-left:${left}px">${t.icon}${trail}</div>`;
        })}
        <div class="tb-sep" style="margin-left:${1172 - end}px"></div>
        <div class="tb-end">${caret}</div>
      </div>`;
  }

  private renderRail() {
    return html`
      <div class="rail">
        <div class="r gear">${gear("#444", "#dcdcdc", 14, 4.5)}</div>
        <div class="r">${railBlock}</div>
        <div class="r">${railOrange}</div>
        <div class="r">${railBracket}</div>
        <div class="r active">${railNav}</div>
        <div class="r">${railTable}</div>
        <div class="r">${railMachine}</div>
        <div class="r">${railBooks}</div>
        <div class="r m14">${railInfo}</div>
        <div class="r m10">${railGlobe}</div>
        <div class="r wave">${railWave}</div>
        <div class="r tiny">${arrowSmall}</div>
        <div class="r tiny">${arrowSmall}</div>
        <div class="r tiny">${arrowTiny}</div>
      </div>`;
  }

  private renderNav() {
    const dots = (w: number, body: unknown) => ic(w, 20, svg`<g stroke="#888" stroke-dasharray="1 1">${body}</g>`);
    return html`
      <div class="nav">
        <div class="nav-title">工序导航器 -</div>
        <div class="nav-table">
          <div class="nav-head">名称</div>
          <div class="row geo">GEOMETRY</div>
          <div class="row">${dots(21, svg`<path d="M11 10v10M11 10h10"/>`)}${treeFolder}<span class="t2">未用项</span></div>
          <div class="row">
            ${ic(21, 20, svg`<rect x="6.500" y="6.500" width="8" height="8" fill="#fff" stroke="#aaa"/><path d="M8.500 10.500h4" stroke="#333"/><path d="M11 0v6M15 10h5" stroke="#888" stroke-dasharray="1 1"/>`)}
            ${treeAxes}<span class="t2">MCS_</span>
          </div>
          <div class="row">${dots(40, svg`<path d="M29 0v20M29 10h11"/>`)}${treeCube}<span class="t3">W</span></div>
          <div class="row">
            ${dots(40, svg`<path d="M29 0v10M29 10h9"/>`)}
            ${ic(14, 18, svg`<path d="M7 1v11M7 14v3" stroke="#f0d040" stroke-width="2"/>`)}
            ${treeOp}
          </div>
          ${Array.from({ length: 16 }, () => html`<div class="row"></div>`)}
        </div>
        <div class="nav-scroll"><i class="tri-l"></i><div class="nav-thumb"></div></div>
        <div class="nav-bar"></div>
        <div class="nav-link">相关性</div>
        <div class="nav-bar2"></div>
        <div class="nav-link">细节</div>
      </div>`;
  }

  private renderScene() {
    const lines = Array.from({ length: 14 }, (_, k) => 512 + k * 4.4);
    return html`
      <svg class="view" viewBox="454 272 912 496">
        <defs>
          <linearGradient id="bg" x1="0" y1="0" x2="0" y2="1"><stop offset="0" stop-color="#b3b4b6"/><stop offset=".4" stop-color="#cbcccd"/><stop offset="1" stop-color="#e9eaea"/></linearGradient>
          <linearGradient id="leftB" x1="0" y1="0" x2="1" y2="0"><stop offset="0" stop-color="#333"/><stop offset=".18" stop-color="#4e4e4e"/><stop offset=".72" stop-color="#505050"/><stop offset=".84" stop-color="#5e5e5e"/><stop offset="1" stop-color="#3e3e3e"/></linearGradient>
          <linearGradient id="rightB" x1="0" y1="0" x2="1" y2="0"><stop offset="0" stop-color="#333"/><stop offset=".2" stop-color="#505050"/><stop offset=".75" stop-color="#505050"/><stop offset="1" stop-color="#444"/></linearGradient>
          <linearGradient id="sideL" x1="0" y1="0" x2="1" y2="0"><stop offset="0" stop-color="#444"/><stop offset=".5" stop-color="#5a5a5a"/><stop offset="1" stop-color="#505050"/></linearGradient>
          <linearGradient id="fillet" x1="0" y1="0" x2="1" y2="0"><stop offset="0" stop-color="#3c3c3c"/><stop offset=".6" stop-color="#8a8a8a"/><stop offset="1" stop-color="#555"/></linearGradient>
          <linearGradient id="yel" x1="0" y1="0" x2="1" y2="0"><stop offset="0" stop-color="#dcb42a"/><stop offset=".5" stop-color="#f4d038"/><stop offset="1" stop-color="#d4a826"/></linearGradient>
          <clipPath id="wall"><path d="M659 510L743 478 750 493C753 505 754 514 760 519L771 523 648 572z"/></clipPath>
        </defs>
        <rect x="454" y="272" width="912" height="496" fill="url(#bg)"/>

        <path d="M585.500 380V596" stroke="#3a3ad0" stroke-width="3" stroke-dasharray="2 1"/>
        <path d="M669.500 380V506" stroke="#5a5ad0" stroke-width="3"/>

        <path d="M608 592L814.500 518V601H608z" fill="url(#leftB)"/>
        <path d="M590 599L590 597 640 573 646 560 652 527 659 510 743 478 750 493C753 505 754 514 760 519L771 523 832 509 814 519z" fill="#14eeee"/>
        <g clip-path="url(#wall)" stroke="#2a7a80" stroke-width="1">
          ${lines.map((y) => svg`<path d="M640 ${y + 7.600}L770 ${y - 41.800}"/>`)}
        </g>
        <path d="M659 510L744 478" stroke="#3a3a3a" stroke-width="2"/>
        <path d="M646 559L640 573" stroke="#48d848" stroke-width="1.500"/>
        <rect x="710" y="273" width="6.500" height="250" fill="url(#yel)"/>
        <rect x="710" y="273" width="6.500" height="7" fill="#8a8a70"/>
        <rect x="710" y="518" width="6.500" height="5" fill="#9a9030"/>

        <path d="M878 515L932 522C942 520 944 505 948 478L1033 509 1042 563 1052 575 1084 590V601H878z" fill="url(#rightB)"/>
        <path d="M932 521C942 520 944 505 948 478L977 489 938 523z" fill="url(#fillet)"/>
        <path d="M977 489L1024 507 1031 557 938 523z" fill="#777"/>
        <path d="M1024 507L1033 509 1042 563 1031 557z" fill="#6a6a6a"/>
        <path d="M916 526L938 523 1031 557 1042 563 1052 575 1048 577 920 531z" fill="#5c5c5c"/>
        <path d="M938 523L1031 557M977 489L938 523M1024 507L1031 557M908 523L1048 577M914 527L1048 579M1031 557L1028 563" stroke="#333" stroke-width=".8" fill="none"/>

        <rect x="540" y="601" width="612" height="89" fill="#505050"/>
        <rect x="540" y="601" width="22" height="89" fill="url(#sideL)"/>
        <rect x="1130" y="601" width="22" height="89" fill="url(#sideL)"/>
        <path d="M562.500 601v89M1130.500 601v89" stroke="#333"/>
        <path d="M540 601h68M814 601h64M1084 601h68" stroke="#3a3a3a"/>
        <path d="M608 601h206" stroke="#2c4a8c"/>
        <path d="M540 690.500h612" stroke="#6a6a6a"/>

        <path d="M846 590v100" stroke="#1a4fd8" stroke-width="1.500"/>
        <path d="M846 587l-3.500 20h7z" fill="#1a4fd8"/>
        <path d="M846 636l-3 20 3 22 3-22z" fill="#1a4fd8"/>
        <path d="M846 690.500h100" stroke="#d83a3a" stroke-width="1.500"/>
        <path d="M853 690.500l20-3 21 3-21 3zM929 690.500l-2-4 21 4-21 3z" fill="#d83a3a"/>
        <circle cx="846" cy="690" r="2.500" fill="#1c8a3a"/><circle cx="846" cy="689" r="1" fill="#fff"/>
        <text x="851" y="584" font-size="12" fill="#2a50c8">ZM</text>
        <text x="851" y="633" font-size="12" fill="#3058b8">ZC</text>
        <text x="888" y="686" font-size="12" fill="#b83a3a">XC</text>
        <text x="935" y="686" font-size="12" fill="#c83a3a">XM</text>
        <text x="848" y="688" font-size="10" fill="#3aa03a">YM</text>
      </svg>`;
  }

  private renderDialog() {
    const left = ((FEED_NOW - FEED_MIN) / (FEED_MAX - FEED_MIN)) * 294 + 7;
    return html`
      <div class="dlg">
        <div class="dlg-title">
          ${gear("#fff", "#549ebb", 15)}
          <span>刀轨可视化</span>
          ${ic(12, 12, svg`<path d="M1 1l10 10M11 1L1 11" stroke="#fff" stroke-width="2"/>`)}
        </div>
        <div class="dlg-body">
          <div class="dlg-main">
            <div class="list">
              <div class="list-text">GOTO/-119.329,99.832,146.791</div>
              <div class="sel"></div>
              <div class="hs"><i class="tri-l"></i><div class="hs-thumb">III</div><i class="tri-r"></i></div>
              <div class="spin"><i class="tri-u"></i><i class="tri-d"></i></div>
            </div>
            <div class="slide">
              <div class="slide-val" style="left:${left + 2}px">${FEED_NOW}</div>
              <div class="track"></div>
              <div class="thumb" style="left:${left - 2}px"></div>
            </div>
            <div class="ends"><span>${FEED_MIN}</span><span>${FEED_MAX}</span></div>
            <div class="feed">进给率 (MMPM) 250.000000</div>
            <div class="dtabs"><div class="dtab on">重播</div><div class="dtab">3D 动态</div></div>
            <div class="panel">
              <div class="lbl">显示选项</div>
              <div class="r-ctl m5"><span>刀具</span><div class="sel-box w51">刀具${caret}</div></div>
              <div class="chk m1"><i></i><span>2D 除料</span></div>
              <div class="chk"><i></i><span>显示上一个 IPW</span></div>
              <div class="hr"></div>
              <div class="lbl m5">运动显示</div>
              <div class="r-ctl m5"><span>刀轨</span><div class="sel-box w135">全部${caret}</div></div>
              <div class="r-ctl"><span>刀具轨迹</span><div class="sel-box w75">工具提示${caret}</div></div>
              <div class="r-ctl off"><span>运动数</span><div class="num">10</div></div>
              <div class="chk m1"><i></i><span>在每一层暂停</span></div>
              <div class="chk"><i></i><span>显示刀具接触</span></div>
              <div class="hr"></div>
              <div class="wide-btn">过切和碰撞设置</div>
            </div>
            <div class="anim">动画速度</div>
            <div class="nine">9</div>
            <div class="nine-thumb"></div>
          </div>
          <div class="vbar">
            <div class="vbtn"><i class="tri-u"></i></div>
            <div class="vthumb"><div class="grip"></div></div>
          </div>
          <div class="dlg-edge"></div>
        </div>
      </div>`;
  }

  render() {
    return html`
      <div class="blank"></div>
      ${this.renderTitle()}
      ${this.renderTabs()}
      ${this.renderRibbon()}
      ${this.renderToolbar()}
      <div class="main">
        ${this.renderRail()}
        ${this.renderNav()}
        <div class="work">
          <div class="strip"><i></i></div>
          <div class="strip-line"></div>
          ${this.renderScene()}
        </div>
      </div>
      ${this.renderDialog()}
      <div class="tray"></div>
      <div class="speed">0.3K/s</div>
      <div class="up"></div>
      <div class="ball"></div>
    `;
  }
}
